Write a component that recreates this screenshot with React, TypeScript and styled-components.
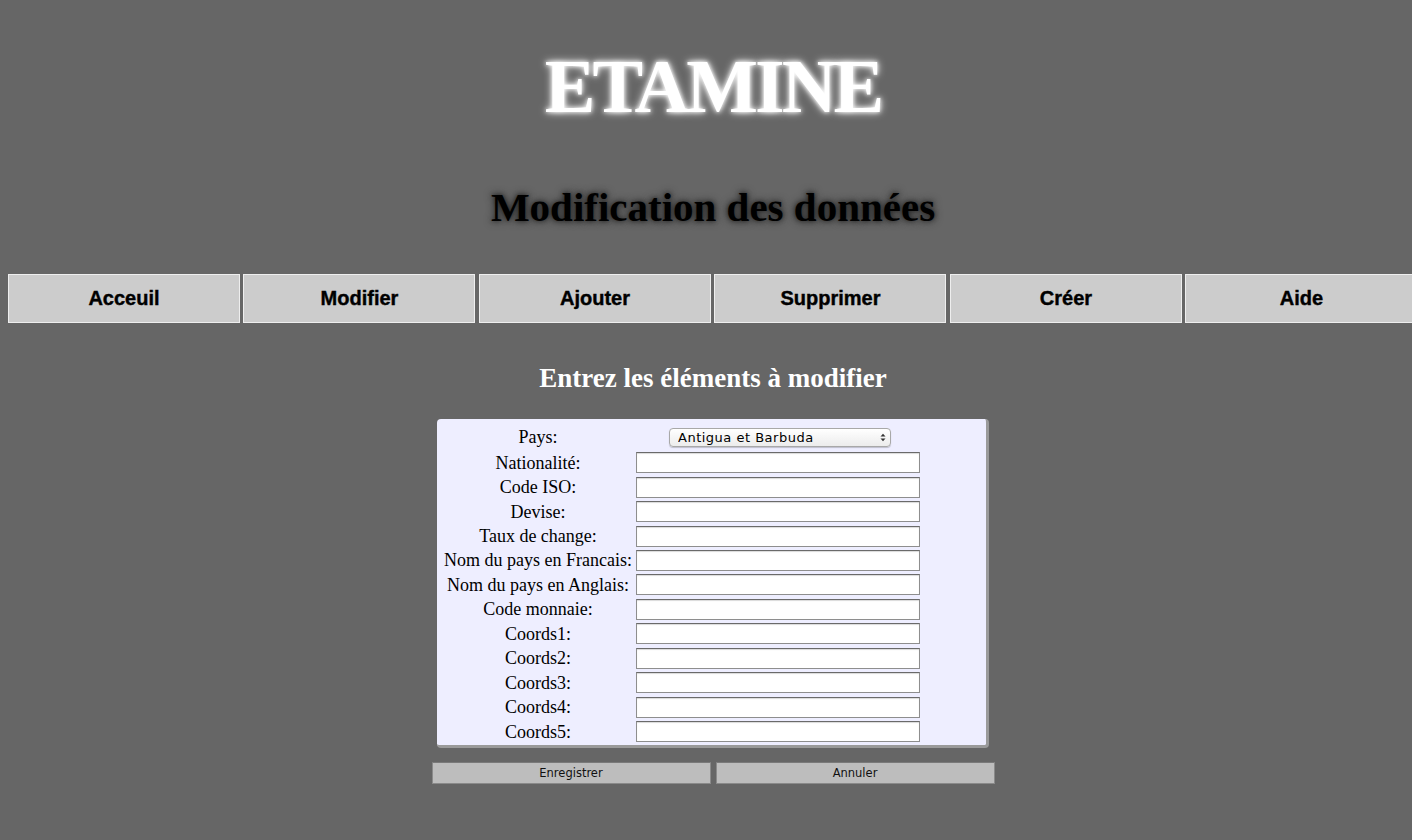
import React from "react";
import styled, { createGlobalStyle } from "styled-components";

const GlobalStyle = createGlobalStyle`
  html {
    overflow: hidden;
    background: #666666;
  }
  body {
    margin: 8px;
    width: 1413px;
    background: #666666;
    font-family: "Liberation Serif", "Times New Roman", serif;
  }
`;

const NAV_ITEMS = ["Acceuil", "Modifier", "Ajouter", "Supprimer", "Créer", "Aide"];

const FIELDS = [
  "Nationalité:",
  "Code ISO:",
  "Devise:",
  "Taux de change:",
  "Nom du pays en Francais:",
  "Nom du pays en Anglais:",
  "Code monnaie:",
  "Coords1:",
  "Coords2:",
  "Coords3:",
  "Coords4:",
  "Coords5:",
];

const App: React.FC = () => {
  return (
    <Page>
      <GlobalStyle />
      <Title>ETAMINE</Title>
      <Subtitle>Modification des données</Subtitle>

      <Nav>
        {NAV_ITEMS.map((item) => (
          <NavItem key={item}>{item}</NavItem>
        ))}
      </Nav>

      <SectionTitle>Entrez les éléments à modifier</SectionTitle>

      <FormBox>
        <Table>
          <tbody>
            <Row $tall>
              <Label>Pays:</Label>
              <FieldCell $center>
                <SelectWrap>
                  <Select defaultValue="ag">
                    <option value="ag">Antigua et Barbuda</option>
                  </Select>
                  <SelectArrows>
                    <svg width="6" height="9" viewBox="0 0 6 9">
                      <path d="M0.5 3.5 L3 0.8 L5.5 3.5 Z" fill="#333" />
                      <path d="M0.5 5.5 L3 8.2 L5.5 5.5 Z" fill="#333" />
                    </svg>
                  </SelectArrows>
                </SelectWrap>
              </FieldCell>
            </Row>
            {FIELDS.map((label) => (
              <Row key={label}>
                <Label>{label}</Label>
                <FieldCell>
                  <Input type="text" />
                </FieldCell>
              </Row>
            ))}
          </tbody>
        </Table>
      </FormBox>

      <Buttons>
        <Button type="button">Enregistrer</Button>
        <Button type="button">Annuler</Button>
      </Buttons>
    </Page>
  );
};

const Page = styled.div`
  width: 1410px;
  display: flex;
  flex-direction: column;
  align-items: center;
`;

const Title = styled.h1`
  margin: 33px 0 0;
  font-family: "Liberation Serif", "Times New Roman", serif;
  font-size: 76px;
  line-height: 90px;
  font-weight: bold;
  letter-spacing: -3px;
  color: #ffffff;
  text-shadow: 0 0 8px #ffffff, 0 0 4px #ffffff;
`;

const Subtitle = styled.h2`
  margin: 48px 0 0;
  font-family: "Liberation Serif", "Times New Roman", serif;
  font-size: 41px;
  line-height: 56px;
  font-weight: bold;
  color: #000000;
  text-shadow: 0 0 8px #222222, 0 0 4px #333333;
`;

const Nav = styled.ul`
  list-style: none;
  align-self: flex-start;
  width: 1413px;
  display: flex;
  margin: 39px 0 0;
  padding: 0;
`;

const NavItem = styled.li`
  box-sizing: border-box;
  flex: 0 0 calc(100% / 6 - 3.5px);
  margin-right: 3.5px;
  height: 49px;
  border: 1px solid #eeeeee;
  background: #cccccc;
  display: flex;
  align-items: center;
  justify-content: center;
  font-family: "Liberation Sans", Arial, sans-serif;
  font-weight: bold;
  font-size: 20px;
  -webkit-text-stroke: 0.4px #000000;
  color: #000000;
`;

const SectionTitle = styled.h3`
  margin: 38px 0 0;
  font-family: "Liberation Serif", "Times New Roman", serif;
  font-size: 27px;
  line-height: 34px;
  font-weight: bold;
  color: #ffffff;
`;

const FormBox = styled.div`
  box-sizing: border-box;
  width: 552px;
  height: 329px;
  margin-top: 24px;
  padding: 5px 0 0 6px;
  background: #eeeeff;
  border-radius: 4px;
  border-right: 3px solid #9a9a9a;
  border-bottom: 3px solid #9a9a9a;
`;

const Table = styled.table`
  border-collapse: collapse;
`;

const Row = styled.tr<{ $tall?: boolean }>`
  height: ${(p) => (p.$tall ? "26.5px" : "24.45px")};
`;

const Label = styled.td`
  width: 190px;
  padding: 0;
  text-align: center;
  font-family: "Liberation Serif", "Times New Roman", serif;
  font-size: 18px;
  line-height: 20px;
  color: #000000;
  white-space: nowrap;
`;

const FieldCell = styled.td<{ $center?: boolean }>`
  width: 288px;
  padding: 0 0 0 3px;
  text-align: ${(p) => (p.$center ? "center" : "left")};
`;

const Input = styled.input`
  box-sizing: border-box;
  display: block;
  width: 284px;
  height: 21px;
  margin: 0;
  padding: 1px 3px;
  background: #ffffff;
  border: 1px solid #8e8e8e;
  border-top-color: #6a6a6a;
  box-shadow: inset 0 1px 1px rgba(0, 0, 0, 0.15);
`;

const SelectWrap = styled.div`
  position: relative;
  display: inline-block;
  width: 222px;
  height: 19px;
  vertical-align: middle;
`;

const Select = styled.select`
  appearance: none;
  box-sizing: border-box;
  width: 100%;
  height: 100%;
  margin: 0;
  padding: 0 16px 0 8px;
  border: 1px solid #a8a8a8;
  border-radius: 4px;
  background: linear-gradient(#ffffff, #ececec);
  font-family: "DejaVu Sans", "Liberation Sans", sans-serif;
  font-size: 13px;
  letter-spacing: 0.5px;
  color: #000000;
  box-shadow: 0 1px 1px rgba(0, 0, 0, 0.2);
`;

const SelectArrows = styled.span`
  position: absolute;
  right: 5px;
  top: 5px;
  display: flex;
  pointer-events: none;
`;

const Buttons = styled.div`
  display: flex;
  gap: 5px;
  margin-top: 14px;
`;

const Button = styled.button`
  box-sizing: border-box;
  width: 279px;
  height: 22px;
  margin: 0;
  padding: 0;
  background: #bdbdbd;
  border: 1px solid #8a8a8a;
  border-top-color: #7a7a7a;
  font-family: "DejaVu Sans", "Liberation Sans", sans-serif;
  font-size: 11.5px;
  color: #111111;
`;

export default App;
